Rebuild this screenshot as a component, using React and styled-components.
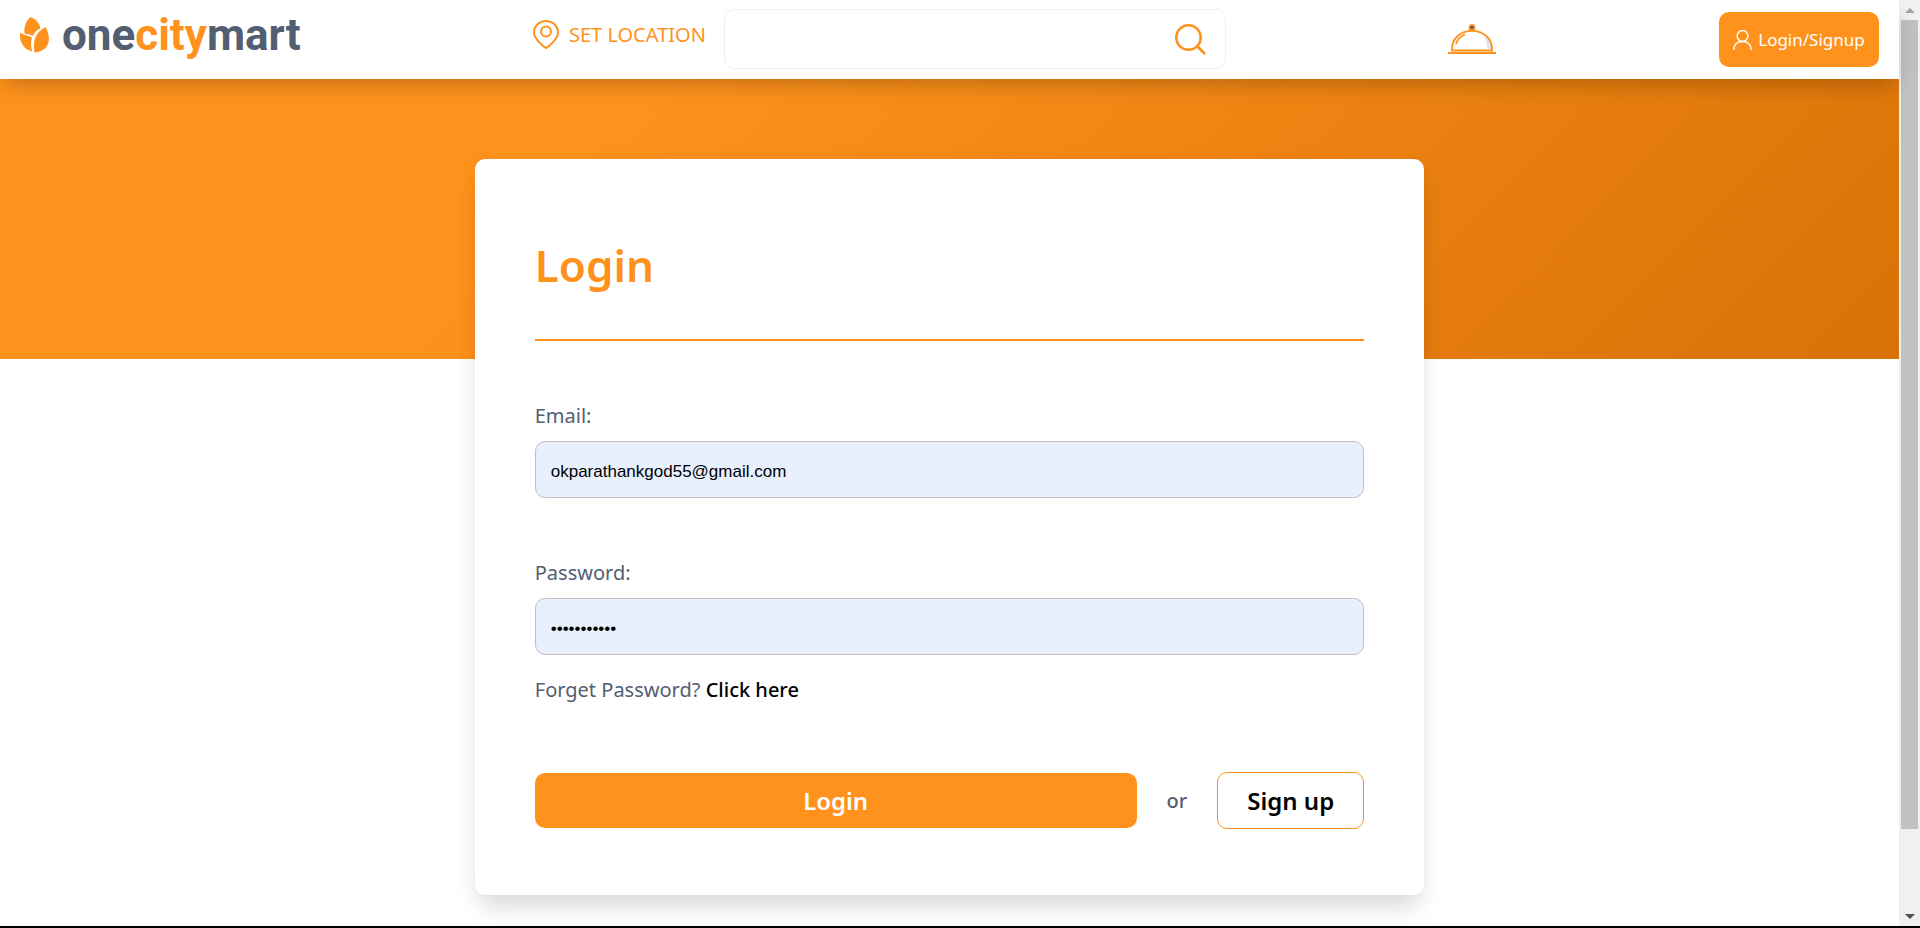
import React from "react";
import styled, { createGlobalStyle } from "styled-components";

const GlobalStyle = createGlobalStyle`
  * {
    box-sizing: border-box;
    margin: 0;
    padding: 0;
  }

  body {
    background: #fff;
    font-family: "Noto Sans", "Open Sans", sans-serif;
    font-weight: 400;
    color: #525e72;
  }

  button,
  input {
    font-family: inherit;
  }

  a {
    text-decoration: none;
  }
`;

const Logo = () => (
  <Brand href="#home">
    <svg width="30" height="36" viewBox="0 0 30 36" fill="#ff921c" aria-hidden="true">
      <path d="M10.5 0C16 2 20 7 20.300 11.500C16.500 13.500 14 16 13 18.800C10 17.500 8 17 4.500 16.500C4 9 6 3.500 10.500 0Z" />
      <path d="M0 15.500C3 18 8 18.500 11.800 20.200C10.800 25 11 30 12 34.500C4 32.500-1 25.500 0 15.500Z" />
      <path d="M25.500 10C32.500 23 28.500 34.500 14.500 35.500C13 25 14 16.500 25.500 10Z" />
    </svg>
    <BrandName>
      one<em>city</em>mart
    </BrandName>
  </Brand>
);

const LocationIcon = () => (
  <svg width="26" height="29" viewBox="0 0 26 29" fill="none" stroke="#ff921c" strokeWidth="2" aria-hidden="true">
    <path d="M13 28C11 27 1 19 1 12.500C1 6 6.400 1 13 1S25 6 25 12.500C25 19 15 27 13 28Z" />
    <circle cx="13" cy="11.500" r="5" />
  </svg>
);

const SearchIcon = () => (
  <svg width="31" height="31" viewBox="0 0 31 31" fill="none" stroke="#ff921c" strokeWidth="2.600" aria-hidden="true">
    <circle cx="13.500" cy="13.500" r="12.200" />
    <path d="M22 22L30 30" />
  </svg>
);

const DishIcon = () => (
  <svg width="48" height="30" viewBox="0 0 48 30" fill="none" stroke="#ff921c" aria-hidden="true">
    <path d="M35 10C41 14 43 19 43 25H39C39 19 38 14 35 10Z" fill="#dce4ec" stroke="none" />
    <path d="M4 26.500V25C4 14 13 6.800 24 6.800S44 14 44 25V26.500Z" strokeWidth="1.800" />
    <path d="M8 20C9.500 15 12 12.500 17 10.500" strokeWidth="1.800" />
    <circle cx="24" cy="3.500" r="2.600" fill="#525e72" strokeWidth="1.800" />
    <path d="M0 29H48" strokeWidth="2" />
  </svg>
);

const UserIcon = () => (
  <svg width="19" height="20" viewBox="0 0 19 20" fill="none" stroke="#fff" strokeWidth="1.500" aria-hidden="true">
    <circle cx="9.500" cy="6" r="5.400" />
    <path d="M0.800 20C0.800 14.500 4.500 11.400 9.500 11.400S18.200 14.500 18.200 20" />
  </svg>
);

const App = () => {
  return (
    <Screen>
      <GlobalStyle />
      <Page>
        <Header>
          <Logo />
          <SetLocation type="button">
            <LocationIcon />
            SET LOCATION
          </SetLocation>
          <Search>
            <input type="text" aria-label="Search" />
            <button type="submit" aria-label="Search">
              <SearchIcon />
            </button>
          </Search>
          <Orders href="#orders" aria-label="Orders">
            <DishIcon />
          </Orders>
          <Account type="button">
            <UserIcon />
            Login/Signup
          </Account>
        </Header>
        <Hero />
        <Card>
          <Title>Login</Title>
          <Field>
            <label htmlFor="email">Email:</label>
            <input id="email" type="email" defaultValue="okparathankgod55@gmail.com" />
          </Field>
          <Field>
            <label htmlFor="password">Password:</label>
            <input id="password" type="password" defaultValue="passwordabc" />
          </Field>
          <Forgot>
            Forget Password? <a href="#reset">Click here</a>
          </Forgot>
          <Actions>
            <LoginButton type="submit">Login</LoginButton>
            <span>or</span>
            <SignupButton type="button">Sign up</SignupButton>
          </Actions>
        </Card>
      </Page>
      <Scrollbar aria-hidden="true">
        <Arrow $up />
        <Thumb />
        <Track />
        <Arrow />
      </Scrollbar>
    </Screen>
  );
};

const Screen = styled.div`
  display: flex;
  min-height: 100vh;
  border-bottom: 2px solid #000;
`;

const Page = styled.div`
  flex: 1;
  min-width: 0;
`;

const Header = styled.header`
  position: relative;
  z-index: 2;
  display: flex;
  align-items: flex-start;
  height: 79px;
  padding: 0 20px;
  background: #fff;
  box-shadow: 0 10px 20px -5px rgba(0, 0, 0, 0.23);
`;

const Brand = styled.a`
  display: flex;
  align-items: center;
  gap: 12px;
  width: 513px;
  height: 70px;
`;

const BrandName = styled.span`
  font-family: Roboto, sans-serif;
  font-size: 44px;
  font-weight: 700;
  line-height: 70px;
  color: #525e72;

  em {
    font-style: normal;
    color: #ff921c;
  }
`;

const SetLocation = styled.button`
  display: flex;
  align-items: center;
  gap: 10px;
  width: 191px;
  height: 68px;
  border: none;
  background: none;
  font-size: 20px;
  font-weight: 400;
  white-space: nowrap;
  color: #ff921c;
`;

const Search = styled.form`
  display: flex;
  align-items: center;
  width: 27%;
  height: 60px;
  margin-top: 9px;
  padding: 0 19px;
  border: 1px solid #efefef;
  border-radius: 10px;

  input {
    flex: 1;
    min-width: 0;
    height: 100%;
    border: none;
    outline: none;
    font-size: 17px;
  }

  button {
    display: flex;
    border: none;
    background: none;
  }
`;

const Orders = styled.a`
  display: flex;
  align-items: center;
  height: 78px;
  margin: 0 auto;
`;

const Account = styled.button`
  display: flex;
  align-items: center;
  justify-content: center;
  gap: 6px;
  width: 160px;
  height: 55px;
  margin-top: 12px;
  border: none;
  border-radius: 10px;
  background: #ff921c;
  font-size: 17px;
  font-weight: 400;
  color: #fff;
`;

const Hero = styled.div`
  height: 280px;
  background: linear-gradient(135deg, #ff921c 30%, #d97106);
`;

const Card = styled.form`
  position: relative;
  width: 50%;
  margin: -200px auto 0;
  padding: 60px 60px 66px;
  border-radius: 10px;
  background: #fff;
  box-shadow: 0 20px 25px -5px rgba(0, 0, 0, 0.1),
    0 5px 20px rgba(0, 0, 0, 0.06);
`;

const Title = styled.h1`
  height: 122px;
  margin-bottom: 60px;
  border-bottom: 2px solid #ff921c;
  font-size: 44px;
  font-weight: 600;
  line-height: 92px;
  color: #ff921c;
`;

const Field = styled.div`
  display: flex;
  flex-direction: column;
  gap: 10px;

  & + & {
    margin-top: 60px;
  }

  label {
    font-size: 20px;
    line-height: 30px;
  }

  input {
    height: 57px;
    padding: 4px 15px 0;
    border: 1px solid #bfbfc4;
    border-radius: 10px;
    outline: none;
    background: #e8f0fe;
    font-family: "Liberation Sans", Arial, sans-serif;
    font-size: 17px;
    color: #000;
  }
`;

const Forgot = styled.p`
  margin-top: 20px;
  font-size: 20px;
  line-height: 30px;

  a {
    font-weight: 500;
    color: #000;
  }
`;

const Actions = styled.div`
  display: flex;
  align-items: center;
  gap: 30px;
  margin-top: 67px;

  span {
    font-size: 20px;
    font-weight: 500;
  }
`;

const LoginButton = styled.button`
  flex: 1;
  height: 55px;
  border: none;
  border-radius: 10px;
  background: #ff921c;
  font-size: 24px;
  font-weight: 600;
  color: #fff;
`;

const SignupButton = styled.button`
  width: 147px;
  height: 57px;
  border: 1px solid #ff921c;
  border-radius: 10px;
  background: #fff;
  font-size: 24px;
  font-weight: 600;
  color: #000;
`;

const Scrollbar = styled.div`
  display: flex;
  flex-direction: column;
  width: 21px;
  padding: 0 2px;
  background: #f0f0f0;
`;

const Arrow = styled.div`
  display: flex;
  align-items: center;
  justify-content: center;
  height: 20px;

  &::before {
    content: "";
    border: 5px solid transparent;
    border-top-width: ${({ $up }) => ($up ? "0" : "5px")};
    border-bottom-width: ${({ $up }) => ($up ? "5px" : "0")};
    border-top-color: #505050;
    border-bottom-color: #a3a3a3;
  }
`;

const Thumb = styled.div`
  flex: 913;
  background: #c1c1c1;
`;

const Track = styled.div`
  flex: 87;
`;

export default App;
